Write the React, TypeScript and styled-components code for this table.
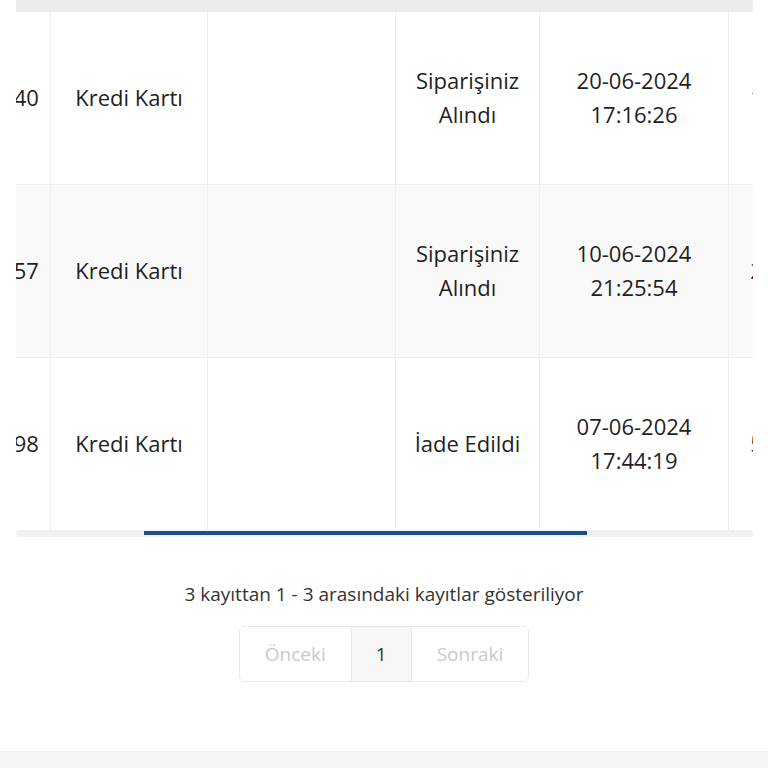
import React, { useLayoutEffect, useRef, useState } from "react";
import styled, { createGlobalStyle } from "styled-components";

const Global = createGlobalStyle`
  html, body { margin: 0; padding: 0; background: #ffffff; }
  body { font-family: "Open Sans", "Noto Sans", sans-serif; color: #212529; }
`;

const Page = styled.div`
  display: flex;
  flex-direction: column;
  min-height: 768px;
`;

const Main = styled.main`
  flex: 1;
  display: flex;
  flex-direction: column;
  align-items: stretch;
`;

const TableWrap = styled.div`
  margin: 0 15px 0 16px;
  display: flex;
  flex-direction: column;
`;

const ScrollBox = styled.div`
  overflow-x: auto;
  overflow-y: hidden;
  scrollbar-width: none;
  &::-webkit-scrollbar { display: none; }
`;

const Track = styled.div`
  height: 7px;
  background: #f1f1f1;
  border-radius: 3px;
  display: flex;
  align-items: center;
`;

const Thumb = styled.div`
  height: 4px;
  margin-top: -1px;
  background: #1d4c8c;
`;

const Table = styled.table`
  width: 1226px;
  table-layout: fixed;
  border-collapse: collapse;
  font-size: 22px;
  line-height: 34px;
`;

const HeadCell = styled.th<{ $w: number }>`
  width: ${(p) => p.$w}px;
  height: 11px;
  padding: 0;
  background: #ebebeb;
`;

const Row = styled.tr<{ $striped: boolean }>`
  background: ${(p) => (p.$striped ? "#f9f9f9" : "#ffffff")};
  border-top: 1px solid #eeeeee;
`;

const Cell = styled.td`
  padding: 51px 12px 53px;
  text-align: center;
  vertical-align: middle;
  border-left: 1px solid #eeeeee;
  border-right: 1px solid #eeeeee;
  color: #1f1f1f;
  overflow: hidden;
`;

const Info = styled.div`
  margin-top: 43px;
  text-align: center;
  font-size: 19px;
  line-height: 28px;
  color: #333;
`;

const Pager = styled.nav`
  align-self: center;
  margin-top: 18px;
  display: flex;
  border: 1px solid #e9e9e9;
  border-radius: 6px;
  overflow: hidden;
`;

const PageBtn = styled.span<{ $active?: boolean; $disabled?: boolean }>`
  display: flex;
  align-items: center;
  justify-content: center;
  height: 54px;
  padding: 0 ${(p) => (p.$active ? 24 : 25)}px;
  font-size: 19px;
  color: ${(p) => (p.$disabled ? "#c9c9c9" : "#333")};
  background: ${(p) => (p.$active ? "#f7f7f7" : "#fff")};
  & + & { border-left: 1px solid #e9e9e9; }
`;

const Footer = styled.footer`
  margin-top: 67px;
  height: 16px;
  border-top: 1px solid #f0f0f0;
  background: #f5f5f5;
`;

const widths = [97, 150, 157, 188, 144, 189, 160, 141];

const rows = [
  ["1", "2406201640", "Kredi Kartı", "", "Siparişiniz Alındı", "20-06-2024 17:16:26", "1.249,90 TL", "Detay"],
  ["2", "2406102157", "Kredi Kartı", "", "Siparişiniz Alındı", "10-06-2024 21:25:54", "2.199,00 TL", "Detay"],
  ["3", "2406071798", "Kredi Kartı", "", "İade Edildi", "07-06-2024 17:44:19", "5.349,00 TL", "Detay"],
];

export default function App() {
  const ref = useRef<HTMLDivElement>(null);
  const [thumb, setThumb] = useState({ left: 128, width: 443 });
  useLayoutEffect(() => {
    const el = ref.current;
    if (!el) return;
    el.scrollLeft = 213;
    const cw = el.clientWidth;
    const sw = el.scrollWidth;
    const width = (cw * cw) / sw;
    const left = sw > cw ? (el.scrollLeft / (sw - cw)) * (cw - width) : 0;
    setThumb({ left, width });
  }, []);
  return (
    <Page>
      <Global />
      <Main>
        <TableWrap>
          <ScrollBox ref={ref}>
            <Table>
              <thead>
                <tr>
                  {widths.map((w, i) => (
                    <HeadCell key={i} $w={w} />
                  ))}
                </tr>
              </thead>
              <tbody>
                {rows.map((r, i) => (
                  <Row key={i} $striped={i % 2 === 1}>
                    {r.map((c, j) => (
                      <Cell key={j}>{c}</Cell>
                    ))}
                  </Row>
                ))}
              </tbody>
            </Table>
          </ScrollBox>
          <Track>
            <Thumb style={{ marginLeft: thumb.left, width: thumb.width }} />
          </Track>
        </TableWrap>
        <Info>3 kayıttan 1 - 3 arasındaki kayıtlar gösteriliyor</Info>
        <Pager>
          <PageBtn $disabled>Önceki</PageBtn>
          <PageBtn $active>1</PageBtn>
          <PageBtn $disabled>Sonraki</PageBtn>
        </Pager>
      </Main>
      <Footer />
    </Page>
  );
}
